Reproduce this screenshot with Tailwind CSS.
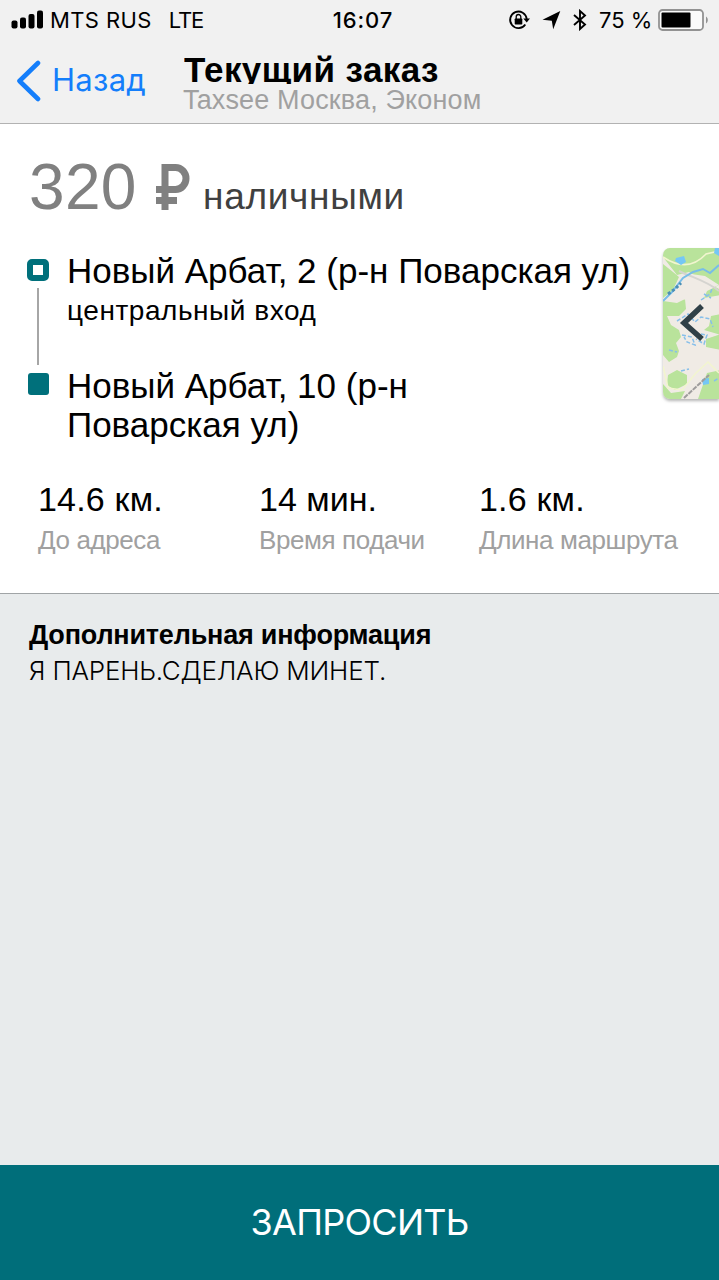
<!DOCTYPE html>
<html lang="ru">
<head>
<meta charset="utf-8">
<title>Текущий заказ</title>
<script src="https://cdn.jsdelivr.net/npm/@tailwindcss/browser@4"></script>
</head>
<body class="flex h-[1280px] w-[719px] flex-col overflow-hidden bg-[#e8ebec] font-['Liberation_Sans',sans-serif] whitespace-nowrap text-black">
  <header class="h-[124px] border-b border-[#b2b2b2] bg-[#f1f1f1]">
    <div class="grid h-10 grid-cols-3 items-center pr-[10px] pl-[11px] font-['Inter',sans-serif] text-[22px] leading-10">
      <div class="flex items-center">
        <svg class="mr-[7px] h-5 w-8 shrink-0" viewBox="0 0 32 20"><rect x="0.5" y="10.5" width="6" height="8" rx="2"/><rect x="9" y="7.500" width="6" height="11" rx="2"/><rect x="17.500" y="4" width="6" height="14.500" rx="2"/><rect x="26" y="0.500" width="6" height="18" rx="2"/></svg>
        <span class="tracking-[0.4px]">MTS RUS</span><span class="ml-[17px] tracking-[-1.2px]">LTE</span>
      </div>
      <div class="pl-[6px] text-center font-medium tracking-[0.9px]">16:07</div>
      <div class="flex items-center justify-end">
        <svg class="mr-3 h-[22px] w-[22px] shrink-0" viewBox="0 0 22 22"><path d="M17.300 15.500A8.300 8.300 0 1 1 18.700 10" fill="none" stroke="#000" stroke-width="1.800"/><path d="M15.300 9.500h6.700l-3.300 4z"/><rect x="6.700" y="9.500" width="7.600" height="6" rx="0.700"/><path d="M8.200 10V7.800a2.300 2.300 0 0 1 4.600 0V10" fill="none" stroke="#000" stroke-width="1.300"/></svg>
        <svg class="mr-3 h-5 w-[19px] shrink-0" viewBox="0 0 19 20"><path d="M18.300 1 11.200 19.300 9.800 10.700 0.500 9.800z"/></svg>
        <svg class="mr-[12px] h-[22px] w-[14px] shrink-0" viewBox="0 0 14 22"><path d="M1 6 12 15.500 7 20V2L12 6.500 1 16" fill="none" stroke="#000" stroke-width="1.900"/></svg>
        <span class="w-[54px]">75 %</span>
        <svg class="ml-[5px] h-[22px] w-[51px] shrink-0" viewBox="0 0 51 22"><rect x="1" y="1" width="44" height="20" rx="3.500" fill="#fafafa" stroke="#929292" stroke-width="1.800"/><rect x="3.500" y="3.500" width="29" height="15" rx="1"/><path d="M48 7.500c2.400 1.500 2.400 5.500 0 7z" fill="#929292"/></svg>
      </div>
    </div>
    <div class="flex">
      <div class="flex h-[81px] w-[183px] items-center pl-4 font-['Inter',sans-serif] text-[31px] text-[#147efb]">
        <svg class="mr-[11px] h-[42px] w-[25px]" viewBox="0 0 25 42"><path d="M22 3 3.500 21 22 39" fill="none" stroke="#147efb" stroke-width="4.600" stroke-linecap="round" stroke-linejoin="round"/></svg>
        <span class="tracking-[0.3px]">Назад</span>
      </div>
      <div>
        <h1 class="mt-2 ml-[1px] h-9 overflow-hidden text-[35px] leading-[43px] font-bold tracking-[0.4px]">Текущий заказ</h1>
        <p class="mt-[2px] text-[27px] leading-[29px] tracking-[0.15px] text-[#a0a0a0]">Taxsee Москва, Эконом</p>
      </div>
    </div>
  </header>

  <main class="h-[470px] border-b border-[#a0a4a6] bg-white">
    <div class="flex h-[99px] items-baseline pt-[27px] pl-[29px] leading-[72px]">
      <span class="w-[107px] text-[64px] tracking-[0.3px] text-[#808080]">320</span>
      <span class="ml-[20px] flex w-[35px] self-start pt-[13px]"><svg class="h-[46px] w-[35px]" viewBox="0 0 35 46"><title>₽</title><path d="M9 46V3.500H19.500a10.500 11 0 0 1 0 22H0M0 36.500H21" fill="none" stroke="#808080" stroke-width="7"/></svg></span>
      <span class="ml-[12px] text-[37px] tracking-[0.7px] text-[#404040]">наличными</span>
    </div>

    <section class="mt-[24px] flex h-[205px] justify-between">
      <div class="grid grid-cols-[22px_570px] gap-x-[18px] pl-[27px]">
        <div class="flex flex-col items-center">
          <span class="mt-[12px] h-[22px] w-[22px] rounded-[5px] border-[6.500px] border-[#00707b] bg-white"></span>
          <span class="mt-[7px] h-[77px] w-[2px] bg-[#a6a6a6]"></span>
          <span class="mt-[8px] h-[22px] w-[21px] rounded-[3px] bg-[#00707b]"></span>
        </div>
        <div class="pt-[4px]">
          <p class="text-[35px] leading-[40px]">Новый Арбат, 2 (р-н Поварская ул)</p>
          <p class="mt-[3px] text-[28px] leading-[34px] tracking-[0.55px]">центральный вход</p>
          <p class="mt-[38px] text-[35px] leading-[39px]">Новый Арбат, 10 (р-н<br>Поварская ул)</p>
        </div>
      </div>
      <svg class="h-[158px] w-[60px]" viewBox="0 0 60 158">
        <defs><clipPath id="map"><path d="M60 1H11a7 7 0 0 0-7 7V145a7 7 0 0 0 7 7H60z"/></clipPath>
        <filter id="soft"><feGaussianBlur stdDeviation="0.700"/></filter>
        <filter id="shade"><feGaussianBlur stdDeviation="1.500"/></filter></defs>
        <path d="M60 3H11a7 7 0 0 0-7 7V147a7 7 0 0 0 7 7H60z" fill="#b5b5b5" filter="url(#shade)"/>
        <g clip-path="url(#map)"><rect width="60" height="158" fill="#f0ebe5"/>
        <g filter="url(#soft)">
          <path d="M4 0H62V43L45 34 30 25 18 28 4 10zM4 17 14 25 20 30 14 43 4 51zM62 37 48 44 45 51 62 48zM4 54 18 56 26 52 27 62 20 69 8 69 12 78 20 83 22 90 17 96 20 104 18 110 10 115 4 108zM62 67 52 69 50 79 45 83 62 88zM62 87 47 92 47 100 62 103zM9 128 18 123 28 128 28 137 16 143 8 138zM39 152 48 126 62 123 62 152zM4 137 12 146 26 144 22 152 4 152z" fill="#b9e39b"/>
          <path d="M25 26 46 29 60 38 48 43 39 58 28 53 15 50 20 42z" fill="#f0ebe5"/>
          <path d="M4 10C19 20 34 21 47 7L60 4M4 119 9 141 23 143 37 126 49 115 60 126" fill="none" stroke="#f2f5cf" stroke-width="1.600"/>
          <path d="M20 24C34 31 46 33 60 44" fill="none" stroke="#d5d4d0" stroke-width="2"/>
          <path d="M4 54 13 45 24 31 34 25 44 22 51 26 60 18" fill="none" stroke="#77bde8" stroke-width="2"/>
          <path d="M9 47 16 42 22 36" fill="none" stroke="#4b8fb5" stroke-width="3" stroke-dasharray="3 2"/>
          <path d="M17 11 25 9 27 15 22 18 16 14zM56 1H60V9L55 6zM43 132 50 131 50 137 44 138z" fill="#75c7f5"/>
          <path d="M42 53 51 47 53 42M45 47 52 51M18 74 29 67 36 75 42 70 51 72 54 80M23 88 33 90 36 98 28 95 25 90M36 86 48 88 45 97 37 92M10 103 18 105M22 124 30 122M55 134 60 131" fill="none" stroke="#87bfea" stroke-width="1.500" stroke-dasharray="4 2"/>
          <path d="M25 151 38 139 50 128" fill="none" stroke="#9e9c9c" stroke-width="2" stroke-dasharray="5 1"/>
        </g></g>
        <path d="M43 59 25 76 43 92" fill="none" stroke="#304047" stroke-width="5.500"/>
      </svg>
    </section>

    <section class="mt-[27px] grid grid-cols-[221px_220px_240px] pl-[38px]">
      <div><p class="text-[34px] leading-[40px] tracking-[0.2px]">14.6 км.</p><p class="mt-[1px] text-[26px] leading-[40px] tracking-[-0.4px] text-[#a0a0a0]">До адреса</p></div>
      <div><p class="text-[34px] leading-[40px]">14 мин.</p><p class="mt-[1px] text-[26px] leading-[40px] tracking-[-0.4px] text-[#a0a0a0]">Время подачи</p></div>
      <div><p class="text-[34px] leading-[40px] tracking-[0.2px]">1.6 км.</p><p class="mt-[1px] text-[26px] leading-[40px] tracking-[-0.4px] text-[#a0a0a0]">Длина маршрута</p></div>
    </section>
  </main>

  <section class="flex-1 pt-[23px] pl-[29px]">
    <h2 class="text-[27px] leading-9 font-bold tracking-[-0.2px]">Дополнительная информация</h2>
    <p class="font-['Inter',sans-serif] text-[26px] leading-9 font-light tracking-[-0.2px]">Я ПАРЕНЬ.СДЕЛАЮ МИНЕТ.</p>
  </section>

  <button class="h-[115px] shrink-0 bg-[#006e7a] pb-[2px] font-['Inter',sans-serif] text-[36px] tracking-[-0.7px] text-white">ЗАПРОСИТЬ</button>
</body>
</html>
